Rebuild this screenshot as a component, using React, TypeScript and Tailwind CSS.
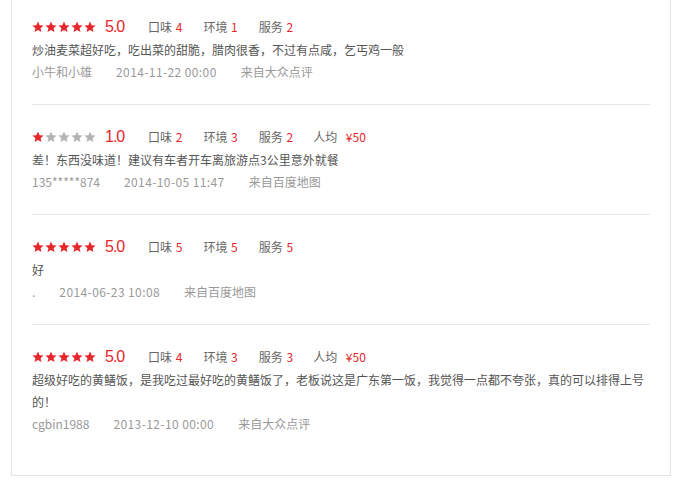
import React from "react";

interface Review {
  score: number;
  taste: number;
  env: number;
  service: number;
  price?: string;
  text: string;
  user: string;
  time: string;
  source: string;
}

const reviews: Review[] = [
  { score: 5, taste: 4, env: 1, service: 2, text: "炒油麦菜超好吃，吃出菜的甜脆，腊肉很香，不过有点咸，乞丐鸡一般", user: "小牛和小雄", time: "2014-11-22 00:00", source: "来自大众点评" },
  { score: 1, taste: 2, env: 3, service: 2, price: "¥50", text: "差！东西没味道！建议有车者开车离旅游点3公里意外就餐", user: "135*****874", time: "2014-10-05 11:47", source: "来自百度地图" },
  { score: 5, taste: 5, env: 5, service: 5, text: "好", user: ".", time: "2014-06-23 10:08", source: "来自百度地图" },
  { score: 5, taste: 4, env: 3, service: 3, price: "¥50", text: "超级好吃的黄鳝饭，是我吃过最好吃的黄鳝饭了，老板说这是广东第一饭，我觉得一点都不夸张，真的可以排得上号的！", user: "cgbin1988", time: "2013-12-10 00:00", source: "来自大众点评" },
];

function Star({ on }: { on: boolean }) {
  return (
    <svg width="12" height="12" viewBox="0 0 24 24" className={on ? "fill-[#e5262b]" : "fill-[#b3b3b3]"}>
      <path d="M12 1l3.2 7.3 8 .7-6.1 5.3 1.9 7.9L12 18 5 22.2l1.9-7.9L.8 9l8-.7z" />
    </svg>
  );
}

function Item({ r, last }: { r: Review; last: boolean }) {
  return (
    <div className={`pt-[20px] pb-[21px] ${last ? "" : "border-b border-[#e6e6e6]"}`}>
      <div className="flex items-center h-[24px]">
        <div className="flex gap-[1px]">
          {[1, 2, 3, 4, 5].map((i) => (
            <Star key={i} on={i <= r.score} />
          ))}
        </div>
        <span className="ml-[9px] w-[20px] text-[16px] tracking-[-1px] text-[#e5262b] leading-none font-['Liberation_Sans',sans-serif]">
          {r.score}.0
        </span>
        <span className="ml-[23px] text-[#666]">口味 <span className="text-[#e5262b] ml-[1px]">{r.taste}</span></span>
        <span className="ml-[21px] text-[#666]">环境 <span className="text-[#e5262b] ml-[1px]">{r.env}</span></span>
        <span className="ml-[21px] text-[#666]">服务 <span className="text-[#e5262b] ml-[1px]">{r.service}</span></span>
        {r.price && (
          <span className="ml-[20px] text-[#666]">
            人均 <span className="text-[#e5262b] ml-[6px]">{r.price}</span>
          </span>
        )}
      </div>
      <p className="text-[#555] leading-[22px]">{r.text}</p>
      <div className="flex gap-[24px] text-[#999] leading-[22px]">
        <span>{r.user}</span>
        <span className="tracking-[0.4px]">{r.time}</span>
        <span>{r.source}</span>
      </div>
    </div>
  );
}

export default function App() {
  return (
    <div className="w-[688px] h-[486px] bg-white overflow-hidden font-['Noto_Sans_CJK_SC',sans-serif] text-[12px]">
      <div className="ml-[11px] w-[660px] mt-[-6px] border border-[#e3e3e3] px-[20px] pb-[19px]">
        {reviews.map((r, i) => (
          <Item key={i} r={r} last={i === reviews.length - 1} />
        ))}
      </div>
    </div>
  );
}
